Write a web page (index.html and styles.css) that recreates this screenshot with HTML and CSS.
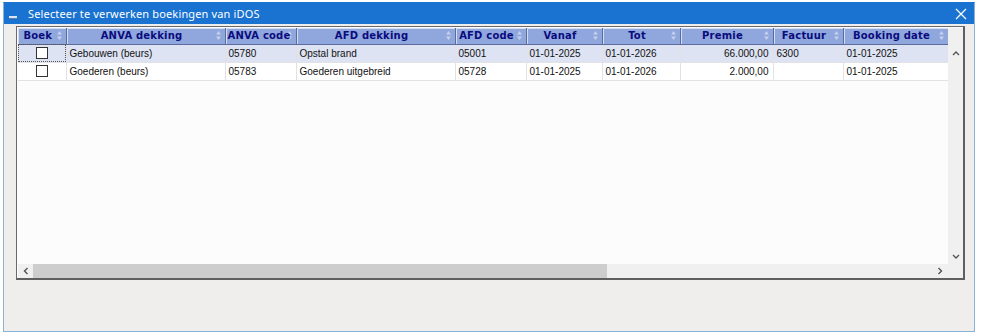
FILE: index.html
```html
<!DOCTYPE html>
<html lang="nl">
<head>
  <meta charset="UTF-8">
  <title>Selecteer te verwerken boekingen van iDOS</title>
  <link rel="stylesheet" href="styles.css">
</head>
<body>
  <div class="window">
    <div class="titlebar">
      <span class="app-icon"></span>
      <span class="title">Selecteer te verwerken boekingen van iDOS</span>
      <svg class="close" width="12" height="12" viewBox="0 0 12 12">
        <path d="M1 1 L11 11 M11 1 L1 11" stroke="#fff" stroke-width="1.2" fill="none"/>
      </svg>
    </div>

    <div class="client">
      <div class="grid">
        <div class="grid-main">
          <div class="grid-view">
            <table>
              <colgroup>
                <col style="width:48px"><col style="width:159px"><col style="width:71px">
                <col style="width:159px"><col style="width:71px"><col style="width:76px">
                <col style="width:78px"><col style="width:93px"><col style="width:70px">
                <col style="width:105px">
              </colgroup>
              <thead>
                <tr>
                  <th>Boek</th>
                  <th>ANVA dekking</th>
                  <th>ANVA code</th>
                  <th>AFD dekking</th>
                  <th>AFD code</th>
                  <th>Vanaf</th>
                  <th>Tot</th>
                  <th>Premie</th>
                  <th>Factuur</th>
                  <th>Booking date</th>
                </tr>
              </thead>
              <tbody>
                <tr class="selected">
                  <td class="check focus"><span class="box"></span></td>
                  <td>Gebouwen (beurs)</td>
                  <td>05780</td>
                  <td>Opstal brand</td>
                  <td>05001</td>
                  <td>01-01-2025</td>
                  <td>01-01-2026</td>
                  <td class="num">66.000,00</td>
                  <td>6300</td>
                  <td>01-01-2025</td>
                </tr>
                <tr>
                  <td class="check"><span class="box"></span></td>
                  <td>Goederen (beurs)</td>
                  <td>05783</td>
                  <td>Goederen uitgebreid</td>
                  <td>05728</td>
                  <td>01-01-2025</td>
                  <td>01-01-2026</td>
                  <td class="num">2.000,00</td>
                  <td></td>
                  <td>01-01-2025</td>
                </tr>
              </tbody>
            </table>
          </div>
          <div class="vscroll">
            <svg width="8" height="6" viewBox="0 0 8 6"><path d="M1 5 L4 2 L7 5" stroke="#555" stroke-width="1.4" fill="none"/></svg>
            <svg width="8" height="6" viewBox="0 0 8 6"><path d="M1 1 L4 4 L7 1" stroke="#555" stroke-width="1.4" fill="none"/></svg>
          </div>
        </div>
        <div class="hscroll">
          <svg class="arrow" width="6" height="8" viewBox="0 0 6 8"><path d="M5 1 L2 4 L5 7" stroke="#555" stroke-width="1.4" fill="none"/></svg>
          <div class="track"><div class="thumb"></div></div>
          <svg class="arrow" width="6" height="8" viewBox="0 0 6 8"><path d="M1 1 L4 4 L1 7" stroke="#555" stroke-width="1.4" fill="none"/></svg>
          <span class="corner"></span>
        </div>
      </div>
    </div>
  </div>
</body>
</html>
```

FILE: styles.css
```css
body {
  margin: 0;
  background: #ffffff;
  font-family: 'Liberation Sans', Arial, sans-serif;
}
.window {
  box-sizing: border-box;
  width: 972px;
  height: 330px;
  margin: 2px 0 0 3px;
  border: 1px solid #86b3d6;
  border-top-color: #1a73d0;
  background: #f0eeed;
  display: flex;
  flex-direction: column;
}
.titlebar {
  height: 21px;
  background: #1a73d0;
  color: white;
  display: flex;
  align-items: center;
  flex-shrink: 0;
}
.app-icon {
  width: 8px;
  height: 2px;
  background: #d8e6f5;
  border-bottom: 1px solid #5d7fa8;
  margin: 7px 0 0 5px;
}
.title {
  font-family: 'Noto Sans', sans-serif;
  font-size: 11px;
  letter-spacing: 0.15px;
  margin-left: 11px;
  flex: 1;
}
.close {
  margin-right: 7px;
}
.client {
  padding: 2px 0 0 12px;
}
.grid {
  box-sizing: border-box;
  width: 949px;
  height: 254px;
  border-left: 1px solid #6a6a6a;
  border-top: 1px solid #6a6a6a;
  border-right: 2px solid #5f5f5f;
  border-bottom: 2px solid #5f5f5f;
  padding: 1px 0 0 1px;
  background: #fdfcfd;
  display: flex;
  flex-direction: column;
}
.grid-main {
  flex: 1;
  display: flex;
  min-height: 0;
}
.grid-view {
  width: 930px;
  overflow: hidden;
}
table {
  border-collapse: collapse;
  table-layout: fixed;
  width: 930px;
}
th {
  box-sizing: border-box;
  height: 16px;
  padding: 0 10px 0 2px;
  background: #8fa7dc url("data:image/svg+xml,%3Csvg xmlns='http://www.w3.org/2000/svg' width='5' height='9'%3E%3Cpath d='M2.5 0L5 3.5H0z M2.5 9L5 5.5H0z' fill='%23c7d0ea'/%3E%3C/svg%3E") no-repeat right 4px center;
  color: #0b0b7e;
  font-family: 'DejaVu Sans', Tahoma, sans-serif;
  font-size: 10px;
  font-weight: bold;
  letter-spacing: 0.2px;
  text-align: center;
  white-space: nowrap;
  border-right: 1px solid #5b6b9b;
  border-bottom: 1px solid #5b6b9b;
  box-shadow: inset 1px 1px 0 #d4ddf3;
}
td {
  height: 17px;
  padding: 0 3px;
  font-size: 10px;
  color: #111;
  white-space: nowrap;
  overflow: hidden;
  border-right: 1px solid #e2e2e6;
  border-bottom: 1px solid #e2e2e6;
  background: #ffffff;
}
.selected td {
  background: #dde3f3;
}
td.num {
  text-align: right;
  padding-right: 4px;
}
td.check {
  text-align: center;
  padding: 0;
}
td.focus {
  outline: 1px dotted #555;
  outline-offset: -1px;
}
.box {
  display: inline-block;
  width: 10px;
  height: 10px;
  border: 1px solid #333;
  background: #fff;
  vertical-align: middle;
}
.vscroll {
  width: 15px;
  background: #f0f0f0;
  display: flex;
  flex-direction: column;
  justify-content: space-between;
  align-items: center;
  padding: 22px 0 4px;
  box-sizing: border-box;
}
.hscroll {
  height: 14px;
  display: flex;
  align-items: center;
  background: #f0f0f0;
  flex-shrink: 0;
}
.hscroll .arrow {
  width: 15px;
}
.track {
  width: 900px;
  height: 100%;
}
.thumb {
  width: 574px;
  height: 100%;
  background: #cdcdcd;
}
.corner {
  width: 15px;
  height: 100%;
  background: #f0f0f0;
}
```
